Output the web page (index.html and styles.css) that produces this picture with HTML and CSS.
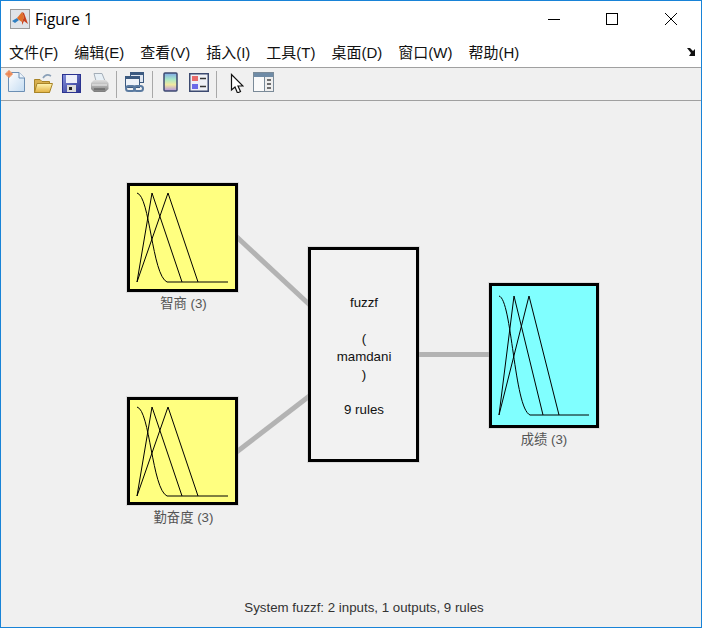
FILE: index.html
```html
<!doctype html>
<html lang="en">

<head>
	<meta charset="utf-8">
	<title>Figure 1</title>
	<link rel="stylesheet" href="styles.css">
</head>

<body>

	<svg class="defs" width="0" height="0">
		<defs>
			<linearGradient id="gradPaper" x1="0" y1="0" x2="1" y2="1">
				<stop offset="0" stop-color="#ffffff" />
				<stop offset="1" stop-color="#c4dcf2" />
			</linearGradient>
			<linearGradient id="gradFolder" x1="0" y1="0" x2="0" y2="1">
				<stop offset="0" stop-color="#fff6b4" />
				<stop offset="1" stop-color="#e2b040" />
			</linearGradient>
			<linearGradient id="gradDisk" x1="0" y1="0" x2="1" y2="1">
				<stop offset="0" stop-color="#8490dc" />
				<stop offset="1" stop-color="#2b3390" />
			</linearGradient>
			<linearGradient id="gradBar" x1="0" y1="0" x2="0" y2="1">
				<stop offset="0" stop-color="#7fa8e8" />
				<stop offset="0.35" stop-color="#a8e8c8" />
				<stop offset="0.65" stop-color="#f2e8a0" />
				<stop offset="1" stop-color="#b090e0" />
			</linearGradient>
			<linearGradient id="gradPrinter" x1="0" y1="0" x2="0" y2="1">
				<stop offset="0" stop-color="#e0e0e0" />
				<stop offset="1" stop-color="#7c7c7c" />
			</linearGradient>
		</defs>
	</svg>

	<div class="window">

		<header class="titlebar">
			<svg class="appicon" width="20" height="20" viewBox="0 0 20 20">
				<rect x="0.5" y="0.5" width="19" height="19" fill="#dfe3e8" stroke="#9a9a9a" />
				<path d="M2 12 L7 9 L9 11 L5 14 Z" fill="#2f7fc0" />
				<path d="M7 9 L12 3 L14 8 L12 13 L9 11 Z" fill="#e0702a" />
				<path d="M12 3 L14 4 L18 15 L14 12 L12 16 L12 13 L14 8 Z" fill="#c8401c" />
			</svg>
			<span class="title">Figure 1</span>
			<div class="winbuttons">
				<svg class="winbutton" width="58" height="36" viewBox="0 0 58 36">
					<path d="M23 19.5 H35" stroke="#000" fill="none" />
				</svg>
				<svg class="winbutton" width="58" height="36" viewBox="0 0 58 36">
					<rect x="23.5" y="13.5" width="11" height="11" stroke="#000" fill="none" />
				</svg>
				<svg class="winbutton" width="58" height="36" viewBox="0 0 58 36">
					<path d="M24 13 L36 25 M36 13 L24 25" stroke="#000" fill="none" />
				</svg>
			</div>
		</header>

		<nav class="menubar">
			<span class="menu">文件(F)</span>
			<span class="menu">编辑(E)</span>
			<span class="menu">查看(V)</span>
			<span class="menu">插入(I)</span>
			<span class="menu">工具(T)</span>
			<span class="menu">桌面(D)</span>
			<span class="menu">窗口(W)</span>
			<span class="menu">帮助(H)</span>
			<svg class="dock" width="9" height="8" viewBox="0 0 9 8">
				<path d="M0 0 H3 L6 3 L8 1 V8 H2 L4 5 Z" fill="#111" />
			</svg>
		</nav>

		<div class="toolbar">
			<!-- new -->
			<svg class="tool tool-new" width="22" height="24" viewBox="0 0 22 24">
				<path d="M4.5 3.5 H15 L20.5 9 V22.5 H4.5 Z" fill="url(#gradPaper)" stroke="#6c8fb4" />
				<path d="M15 3.5 V9 H20.5" fill="#eef5fb" stroke="#6c8fb4" />
				<circle cx="5" cy="5" r="3" fill="#f0a070" />
				<path d="M1 5 H9 M5 1 V9" stroke="#e87a4a" />
			</svg>
			<!-- open -->
			<svg class="tool tool-open" width="20" height="24" viewBox="0 0 20 24">
				<path d="M10 9 Q13 4 18 7" stroke="#8aa0b8" stroke-width="1.5" fill="none" />
				<path d="M1.5 23.5 V10.5 H7 L9 12.5 H16.5 V23.5 Z" fill="#d8b050" stroke="#a88428" />
				<path d="M1.5 23.5 L4 14.5 H19.5 L16.5 23.5 Z" fill="url(#gradFolder)" stroke="#a88428" />
			</svg>
			<!-- save -->
			<svg class="tool tool-save" width="19" height="24" viewBox="0 -1 19 24">
				<rect x="0.5" y="4.5" width="18" height="18" fill="url(#gradDisk)" stroke="#2b3390" />
				<rect x="4" y="5" width="11" height="8" fill="#eef0fa" />
				<rect x="5" y="15" width="9" height="7" fill="#dcdcdc" />
				<rect x="7" y="17" width="3" height="3" fill="#222" />
			</svg>
			<!-- print -->
			<svg class="tool tool-print" width="19" height="24" viewBox="0 -1 19 24">
				<path d="M4 3.5 H12 L15 11 H6 Z" fill="#e8f0f6" stroke="#a4aeb8" />
				<path d="M1 13 L4 10 H16 L18.5 13 V19 L15 22 H4 L1 19 Z" fill="url(#gradPrinter)" />
				<path d="M2 15 H17" stroke="#f0f0f0" />
				<path d="M4 19 H15" stroke="#555" />
			</svg>
			<span class="sep sep-1"></span>
			<!-- link -->
			<svg class="tool tool-link" width="21" height="24" viewBox="0 0 21 24">
				<rect x="6.5" y="3.5" width="13" height="10" fill="#dfe6f0" stroke="#3c5a80" />
				<rect x="6.5" y="3.5" width="13" height="2.5" fill="#3c5a80" />
				<rect x="1.5" y="7.5" width="14" height="11" fill="#eef2f8" stroke="#3c5a80" />
				<rect x="1.5" y="7.5" width="14" height="2.5" fill="#3c5a80" />
				<rect x="2" y="17" width="9" height="5" rx="2.5" fill="none" stroke="#5a7aa0" stroke-width="2" />
				<rect x="10" y="17" width="9" height="5" rx="2.5" fill="none" stroke="#5a7aa0" stroke-width="2" />
			</svg>
			<span class="sep sep-2"></span>
			<!-- colorbar -->
			<svg class="tool tool-colorbar" width="15" height="24" viewBox="0 0 15 24">
				<rect x="1" y="4" width="13" height="18" rx="1" fill="url(#gradBar)" stroke="#3c4a70" stroke-width="1.5" />
			</svg>
			<!-- legend -->
			<svg class="tool tool-legend" width="20" height="24" viewBox="0 0 20 24">
				<rect x="0.75" y="4.75" width="18.5" height="17.5" fill="#eef0f6" stroke="#3c4a70" stroke-width="1.5" />
				<rect x="3" y="7" width="6" height="5" fill="#e86a6a" />
				<rect x="3" y="15" width="6" height="5" fill="#6a6ae8" />
				<path d="M11 9.5 H17 M11 17.5 H17" stroke="#333" stroke-width="1.5" />
			</svg>
			<span class="sep sep-3"></span>
			<!-- pointer -->
			<svg class="tool tool-pointer" width="14" height="24" viewBox="0 -2 14 24">
				<path d="M1.5 3.5 V19 L5 16 L7.5 22 L10.5 20.5 L8 15 H13 Z" fill="#fff" stroke="#111" stroke-width="1.2" />
			</svg>
			<!-- panel -->
			<svg class="tool tool-panel" width="21" height="24" viewBox="0 0 21 24">
				<rect x="0.5" y="3.5" width="20" height="19" fill="#eeeeee" stroke="#7a8a98" />
				<rect x="1" y="4" width="19" height="4" fill="#6f8ba6" />
				<rect x="1" y="8" width="10" height="14" fill="#fafafa" />
				<path d="M11.5 8 V22" stroke="#7a8a98" />
				<path d="M14 11 H18 M14 15 H18 M14 19 H18" stroke="#444" stroke-width="1.5" />
			</svg>
		</div>

		<main class="canvas">
			<svg class="diagram" width="700" height="526" viewBox="1 101 700 526">

				<rect class="halo" x="126.5" y="182.5" width="112" height="110" />
				<rect class="halo" x="126.5" y="396.5" width="112" height="109" />
				<rect class="halo" x="307.5" y="246.5" width="112" height="216" />
				<rect class="halo" x="488.5" y="282.5" width="111" height="146" />

				<path class="wire" d="M232 232.5 L312 307" />
				<path class="wire" d="M232 455.5 L312 394" />
				<path class="wire" d="M415 354.5 H493" />

				<rect class="box box-input" x="128.5" y="184.5" width="108" height="106" />
				<path class="mf" d="M137 193 C150 196 152 275 167 282 H228" />
				<path class="mf" d="M137 282 L152 193 L182 282" />
				<path class="mf" d="M137 282 L168 193 L198 282" />
				<text class="label" x="183.5" y="308">智商 (3)</text>

				<rect class="box box-input" x="128.5" y="398.5" width="108" height="105" />
				<path class="mf" d="M137 407 C150 410 152 489 167 496 H228" />
				<path class="mf" d="M137 496 L152 407 L182 496" />
				<path class="mf" d="M137 496 L168 407 L198 496" />
				<text class="label" x="183.5" y="522">勤奋度 (3)</text>

				<rect class="box box-rules" x="309.5" y="248.5" width="108" height="212" />
				<text class="rules" x="364" y="307">fuzzf</text>
				<text class="rules" x="364" y="343">(</text>
				<text class="rules" x="364" y="361">mamdani</text>
				<text class="rules" x="364" y="379">)</text>
				<text class="rules" x="364" y="414">9 rules</text>

				<rect class="box box-output" x="490.5" y="284.5" width="107" height="142" />
				<path class="mf" d="M499 296 C512 299 514 408 530 415 H589" />
				<path class="mf" d="M499 415 L514 296 L543 415" />
				<path class="mf" d="M499 415 L529 296 L559 415" />
				<text class="label" x="544" y="444">成绩 (3)</text>

				<text class="status" x="364" y="612">System fuzzf: 2 inputs, 1 outputs, 9 rules</text>
			</svg>
		</main>

	</div>

</body>

</html>
```

FILE: styles.css
```css
* {
	box-sizing: border-box;
}

html,
body {
	height: 100%;
}

body {
	background-color: #fff;
	font: 14px "Liberation Sans", "Noto Sans CJK SC", sans-serif;
	margin: 0;
	overflow: hidden;
}

.defs {
	display: block;
	height: 0;
}

.window {
	border: 1px solid #1883d7;
	display: flex;
	flex-direction: column;
	height: 628px;
	width: 702px;
}

.titlebar {
	align-items: center;
	display: flex;
	flex: none;
	height: 36px;
	padding-left: 9px;
}

.appicon {
	flex: none;
}

.title {
	font: 15.5px "Open Sans", "Liberation Sans", sans-serif;
	margin-left: 5px;
}

.winbuttons {
	display: flex;
	margin-left: auto;
	margin-right: 2px;
}

.winbutton {
	display: block;
	margin-bottom: 2px;
}

.menubar {
	align-items: center;
	border-bottom: 1px solid #a0a0a0;
	display: flex;
	flex: none;
	gap: 16px;
	height: 31px;
	padding: 0 5px 0 8px;
}

.menu {
	color: #111;
	font-size: 15px;
	margin-bottom: 2px;
	white-space: nowrap;
}

.dock {
	margin-left: auto;
}

.toolbar {
	align-items: center;
	background-color: #f0f0f0;
	border-bottom: 1px solid #a0a0a0;
	display: flex;
	flex: none;
	height: 33px;
}

.tool {
	display: block;
	flex: none;
	margin-bottom: 6px;
}

.tool-new {
	margin-left: 3px;
}

.tool-open {
	margin-left: 7px;
}

.tool-save {
	margin-left: 9px;
}

.tool-print {
	margin-left: 9px;
}

.sep {
	background-color: #a8a8a8;
	flex: none;
	height: 27px;
	width: 1px;
}

.sep-1 {
	margin-left: 7px;
}

.tool-link {
	margin-left: 7px;
}

.sep-2 {
	margin-left: 7px;
}

.tool-colorbar {
	margin-left: 10px;
}

.tool-legend {
	margin-left: 11px;
}

.sep-3 {
	margin-left: 7px;
}

.tool-pointer {
	margin-left: 13px;
}

.tool-panel {
	margin-left: 9px;
}

.canvas {
	background-color: #f0f0f0;
	flex: 1;
}

.diagram {
	display: block;
}

.wire {
	fill: none;
	stroke: #b3b3b3;
	stroke-width: 5;
}

.halo {
	fill: none;
	stroke: #dcdcdc;
}

.box {
	stroke: #000;
	stroke-width: 3;
}

.box-input {
	fill: #ffff80;
}

.box-output {
	fill: #80ffff;
}

.box-rules {
	fill: #f2f2f2;
}

.mf {
	fill: none;
	stroke: #000;
	stroke-width: 1;
}

.label,
.rules,
.status {
	font-family: "Liberation Sans", "Noto Sans CJK SC", sans-serif;
	font-size: 13.3px;
	text-anchor: middle;
}

.label {
	fill: #555;
}

.rules {
	fill: #111;
}

.status {
	fill: #333;
}
```
